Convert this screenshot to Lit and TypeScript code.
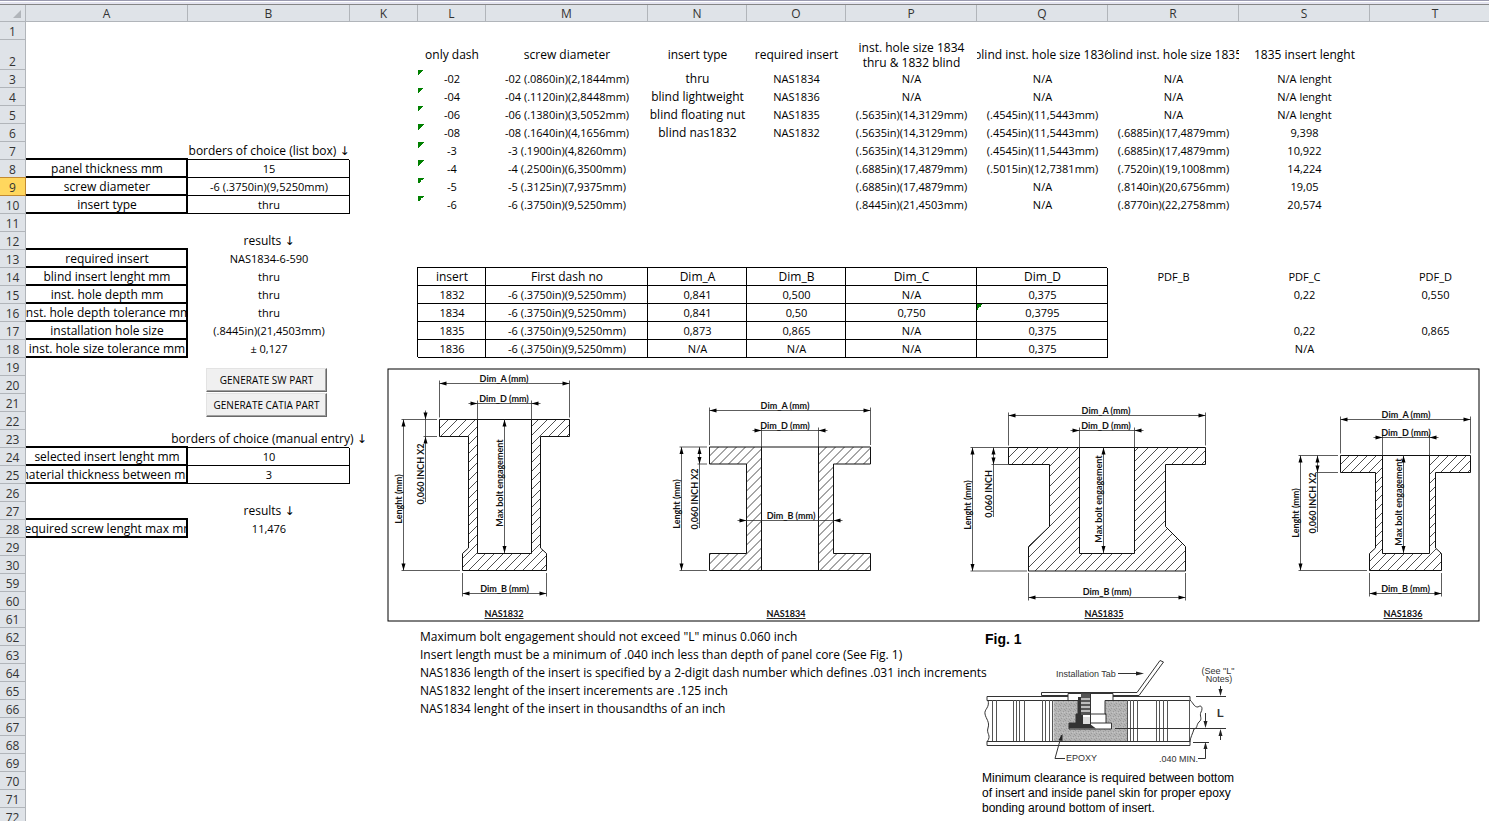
import { LitElement, html, svg, css, nothing } from "lit";
import { customElement } from "lit/decorators.js";
import { classMap } from "lit/directives/class-map.js";

type Cell = { text?: string; look?: string; flag?: boolean };

const COLUMNS = ["A", "B", "K", "L", "M", "N", "O", "P", "Q", "R", "S", "T"];
const WIDTHS: Record<string, string> = {
  A: "wide", B: "wide", K: "narrow", L: "narrow", M: "wide", N: "medium", O: "medium",
  P: "large", Q: "large", R: "large", S: "large", T: "large",
};
const ROWS = [
  ...Array.from({ length: 30 }, (_, i) => i + 1),
  ...Array.from({ length: 14 }, (_, i) => i + 59),
];
const ACTIVE_ROW = 9;

const cells: Record<string, Cell> = {};
const fill = (row: number, from: string, values: string[], look = "") => {
  const start = COLUMNS.indexOf(from);
  values.forEach((text, i) => {
    if (text) cells[COLUMNS[start + i] + row] = { text, look };
  });
};

fill(2, "L", ["only dash", "screw diameter", "insert type", "required insert"], "clip");
fill(2, "P", ["inst. hole size 1834 thru & 1832 blind"], "wrap");
fill(2, "Q", ["blind inst. hole size 1836", "blind inst. hole size 1835", "1835 insert lenght"], "clip");
fill(3, "L", ["-02", "-02 (.0860in)(2,1844mm)", "thru", "NAS1834", "N/A", "N/A", "N/A", "N/A lenght"]);
fill(4, "L", ["-04", "-04 (.1120in)(2,8448mm)", "blind lightweight", "NAS1836", "N/A", "N/A", "N/A", "N/A lenght"]);
fill(5, "L", ["-06", "-06 (.1380in)(3,5052mm)", "blind floating nut", "NAS1835", "(.5635in)(14,3129mm)", "(.4545in)(11,5443mm)", "N/A", "N/A lenght"]);
fill(6, "L", ["-08", "-08 (.1640in)(4,1656mm)", "blind nas1832", "NAS1832", "(.5635in)(14,3129mm)", "(.4545in)(11,5443mm)", "(.6885in)(17,4879mm)", "9,398"]);
fill(7, "L", ["-3", "-3 (.1900in)(4,8260mm)", "", "", "(.5635in)(14,3129mm)", "(.4545in)(11,5443mm)", "(.6885in)(17,4879mm)", "10,922"]);
fill(8, "L", ["-4", "-4 (.2500in)(6,3500mm)", "", "", "(.6885in)(17,4879mm)", "(.5015in)(12,7381mm)", "(.7520in)(19,1008mm)", "14,224"]);
fill(9, "L", ["-5", "-5 (.3125in)(7,9375mm)", "", "", "(.6885in)(17,4879mm)", "N/A", "(.8140in)(20,6756mm)", "19,05"]);
fill(10, "L", ["-6", "-6 (.3750in)(9,5250mm)", "", "", "(.8445in)(21,4503mm)", "N/A", "(.8770in)(22,2758mm)", "20,574"]);
for (let r = 3; r <= 10; r++) cells["L" + r].flag = true;
for (let r = 3; r <= 6; r++) cells["N" + r].look = "words";

fill(7, "B", ["borders of choice (list box) ↓"], "words");
fill(12, "B", ["results ↓"], "words");
fill(23, "B", ["borders of choice (manual entry) ↓"], "words");
fill(27, "B", ["results ↓"], "words");

const labels: [number, string, string, string][] = [
  [8, "panel thickness mm", "15", "box"],
  [9, "screw diameter", "-6 (.3750in)(9,5250mm)", "box"],
  [10, "insert type", "thru", "box"],
  [13, "required insert", "NAS1834-6-590", ""],
  [14, "blind insert lenght mm", "thru", ""],
  [15, "inst. hole depth mm", "thru", ""],
  [16, "inst. hole depth tolerance mm", "thru", ""],
  [17, "installation hole size", "(.8445in)(21,4503mm)", ""],
  [18, "inst. hole size tolerance mm", "± 0,127", ""],
  [24, "selected insert lenght mm", "10", "box"],
  [25, "material thickness between mm", "3", "box"],
  [28, "required screw lenght max mm", "11,476", ""],
];
for (const [row, label, value, look] of labels) {
  fill(row, "A", [label], "heavy");
  fill(row, "B", [value], look);
}

fill(14, "L", ["insert", "First dash no", "Dim_A", "Dim_B", "Dim_C", "Dim_D"], "box title");
fill(15, "L", ["1832", "-6 (.3750in)(9,5250mm)", "0,841", "0,500", "N/A", "0,375"], "box");
fill(16, "L", ["1834", "-6 (.3750in)(9,5250mm)", "0,841", "0,50", "0,750", "0,3795"], "box");
fill(17, "L", ["1835", "-6 (.3750in)(9,5250mm)", "0,873", "0,865", "N/A", "0,375"], "box");
fill(18, "L", ["1836", "-6 (.3750in)(9,5250mm)", "N/A", "N/A", "N/A", "0,375"], "box");
cells["Q16"].flag = true;
fill(14, "R", ["PDF_B", "PDF_C", "PDF_D"]);
fill(15, "S", ["0,22", "0,550"]);
fill(17, "S", ["0,22", "0,865"]);
fill(18, "S", ["N/A"]);

fill(62, "L", ['Maximum bolt engagement should not exceed "L" minus 0.060 inch'], "note");
fill(63, "L", ["Insert length must be a minimum of .040 inch less than depth of panel core (See Fig. 1)"], "note");
fill(64, "L", ["NAS1836 length of the insert is specified by a 2-digit dash number which defines .031 inch increments"], "note");
fill(65, "L", ["NAS1832 lenght of the insert incerements are .125 inch"], "note");
fill(66, "L", ["NAS1834 lenght of the insert in thousandths of an inch"], "note");

/* Arrow heads: tip at x, y, pointing in the given direction. */
const head = (x: number, y: number, dir: "l" | "r" | "u" | "d") => {
  const d = {
    l: `M${x} ${y}l7 -2v4z`,
    r: `M${x} ${y}l-7 -2v4z`,
    u: `M${x} ${y}l-2 7h4z`,
    d: `M${x} ${y}l-2 -7h4z`,
  }[dir];
  return svg`<path class="head" d=${d}></path>`;
};
const line = (d: string) => svg`<path class="dim" d=${d}></path>`;
const label = (x: number, y: number, text: string) =>
  svg`<text class="label" x=${x} y=${y + 3}>${text}</text>`;
const upright = (x: number, y: number, text: string) =>
  svg`<text class="label" x=${x + 3} y=${y} transform=${`rotate(-90 ${x + 3} ${y})`}>${text}</text>`;

type Part = {
  name: string; nameX: number; body: string; bore: string; pitch: number;
  a: [number, number, number]; d: [number, number, number, number]; top: number;
  midX: number; b: [number, number, number, number]; bInside?: boolean;
  len: [number, number, number, number, number]; lenText: number;
  lip: [number, number, number, number]; lipText: string; lipTextY: number; lipOutside?: boolean;
  bolt?: [number, number];
};

const PARTS: Part[] = [
  {
    name: "NAS1832", nameX: 504, pitch: 9,
    body: "M439.5 419.5H477.5V553.5H531.5V419.5H569.5V436.5H540.5V548L546.5 553.5V570.5H462.5V553.5L468.5 548V436.5H439.5Z",
    bore: "M477 419.5H532",
    a: [439.5, 569.5, 383.5], d: [477.5, 531.5, 403.5, 9], top: 419.5, midX: 504,
    b: [462.5, 546.5, 593.5, 589],
    len: [403.5, 419.5, 570.5, 437, 460], lenText: 499,
    lip: [425.5, 436.5, 437, 502], lipText: "0,060 INCH X2", lipTextY: 474, lipOutside: true,
    bolt: [504.5, 483],
  },
  {
    name: "NAS1834", nameX: 786, pitch: 9,
    body: "M709.5 447H761.5V570.5H709.5V553.5H746.5V464H709.5ZM818.5 447H870.5V464H833.5V553.5H870.5V570.5H818.5Z",
    bore: "M761 447H819M761 570.5H819",
    a: [709.5, 870.5, 410.5], d: [761.5, 818.5, 430.5, 9], top: 447, midX: 785,
    b: [746.5, 833.5, 520.5, 516], bInside: true,
    len: [681.5, 447, 570.5, 707, 707], lenText: 504,
    lip: [699.5, 464, 707, 528], lipText: "0,060 INCH X2", lipTextY: 499,
  },
  {
    name: "NAS1835", nameX: 1104, pitch: 10,
    body: "M1008.5 447.5H1079.5V553.5H1134.5V447.5H1205.5V464.5H1165.5V526.5L1185.5 546.5V571H1028.5V546.5L1049.5 526.5V464.5H1008.5Z",
    bore: "M1079 447.5H1135",
    a: [1008.5, 1205.5, 415.5], d: [1079.5, 1134.5, 430.5, 9], top: 447.5, midX: 1106,
    b: [1028.5, 1185.5, 597.5, 592],
    len: [972.5, 447.5, 571, 1008, 1027], lenText: 505,
    lip: [993.5, 464.5, 1008, 517], lipText: "0,060 INCH", lipTextY: 494,
    bolt: [1103.5, 499],
  },
  {
    name: "NAS1836", nameX: 1403, pitch: 9,
    body: "M1340.5 455.5H1382.5V553.5H1429.5V455.5H1470.5V472.5H1435.5V548L1441.5 553.5V570.5H1369.5V553.5L1375.5 548V472.5H1340.5Z",
    bore: "M1382 455.5H1430",
    a: [1340.5, 1470.5, 419.5], d: [1382.5, 1429.5, 437.5, 9], top: 455.5, midX: 1406,
    b: [1369.5, 1441.5, 593.5, 589],
    len: [1300.5, 455.5, 570.5, 1338, 1367], lenText: 513,
    lip: [1317.5, 472.5, 1338, 532], lipText: "0,060 INCH X2", lipTextY: 503,
    bolt: [1403.5, 502],
  },
];

/* Diagonal strokes that cover a part from its top left to its bottom right. */
const hatch = (p: Part) => {
  const height = 572 - p.top;
  let d = "";
  for (let x = p.a[0] - height; x < p.a[1]; x += p.pitch) {
    d += `M${x} 572l${height} ${-height}`;
  }
  return d;
};

const drawPart = (p: Part) => {
  const [a1, a2, ay] = p.a;
  const [d1, d2, dy, tail] = p.d;
  const [b1, b2, by, bText] = p.b;
  const [lx, l1, l2, lTop, lBottom] = p.len;
  const [px, pBottom, pEdge, pEnd] = p.lip;
  return svg`
    <clipPath id=${"clip-" + p.name}><path d=${p.body}></path></clipPath>
    <path class="hatch" clip-path=${`url(#clip-${p.name})`} d=${hatch(p)}></path>
    <path class="edge" d=${p.body}></path>
    <path class="edge" d=${p.bore}></path>
    ${line(`M${a1} ${ay}H${a2}M${a1} ${ay - 3}V${p.top - 2}M${a2} ${ay - 3}V${p.top - 2}`)}
    ${head(a1, ay, "l")}${head(a2, ay, "r")}${label(p.midX, ay - 5, "Dim_A (mm)")}
    ${line(`M${d1 - tail} ${dy}H${d2 + tail}M${d1} ${dy - 3}V${p.top}M${d2} ${dy - 3}V${p.top}`)}
    ${head(d1, dy, "r")}${head(d2, dy, "l")}${label(p.midX, dy - 5, "Dim_D (mm)")}
    ${p.bInside
      ? svg`${line(`M${b1 - 9} ${by}H${b2 + 9}`)}${head(b1, by, "r")}${head(b2, by, "l")}${label(791, bText, "Dim_B (mm)")}`
      : svg`${line(`M${b1} ${by}H${b2}M${b1} 573V${by + 3}M${b2} 573V${by + 3}`)}${head(b1, by, "l")}${head(b2, by, "r")}${label((b1 + b2) / 2, bText, "Dim_B (mm)")}`}
    ${line(`M${lx} ${l1}V${l2}M${lx - 2} ${l1}H${lTop}M${lx - 2} ${l2}H${lBottom}`)}
    ${head(lx, l1, "u")}${head(lx, l2, "d")}${upright(lx - 5, p.lenText, "Lenght (mm)")}
    ${line(`M${px} ${p.lipOutside ? l1 - 9 : l1}V${pEnd}M${px - 2} ${pBottom}H${pEdge}`)}
    ${p.lipOutside
      ? svg`${head(px, l1, "d")}${head(px, pBottom, "u")}`
      : svg`${head(px, l1, "u")}${head(px, pBottom, "d")}`}
    ${upright(px - 5, p.lipTextY, p.lipText)}
    ${p.bolt
      ? svg`${line(`M${p.bolt[0]} ${p.top}V553`)}${head(p.bolt[0], p.top, "u")}${head(p.bolt[0], 553, "d")}${upright(p.bolt[0] - 5, p.bolt[1], "Max bolt engagement")}`
      : nothing}
    <text class="label name" x=${p.nameX} y="617">${p.name}</text>
  `;
};

const partsDrawing = html`
  <svg class="parts" viewBox="387 368 1093 254" role="img" aria-label="Insert types">
    <rect class="frame" x="388" y="369" width="1091" height="252"></rect>
    ${PARTS.map(drawPart)}
  </svg>
`;

const panelDrawing = html`
  <svg class="panel" viewBox="980 652 264 114" role="img" aria-label="Panel section">
    <defs>
      <pattern id="grain" width="5" height="5" patternUnits="userSpaceOnUse">
        <rect width="5" height="5" fill="#b4b4b4"></rect>
        <path d="M0 0h1v1h-1zM3 1h1v1h-1zM1 3h1v1h-1zM4 4h1v1h-1z" fill="#9a9a9a"></path>
        <path d="M2 2h1v1h-1zM4 2h1v1h-1z" fill="#c4c4c4"></path>
      </pattern>
    </defs>
    <rect x="1053.5" y="700" width="74" height="42" fill="url(#grain)"></rect>
    <path class="ink" d="M987 696.5H1190V700.5H987ZM987 741.5H1190V745.5H987Z"></path>
    <path class="core" d="M992.5 700V741M996.5 700V741M1013.5 700V741M1016.5 700V741M1019.5 700V741M1024.5 700V741M1042.5 700V741M1045.5 700V741M1049.5 700V741M1052.5 700V741M1127.5 700V741M1130.5 700V741M1133.5 700V741M1137.5 700V741M1156.5 700V741M1159.5 700V741M1163.5 700V741M1167.5 700V741M1189.5 700V741"></path>
    <path class="ink open" d="M988 700C990 708 984 709 985 714S990 722 988 728S992 735 987 742M1190 700C1194 704 1194 707 1198 707C1202 704 1203 709 1201 712C1199 716 1203 719 1199 722C1196 725 1198 728 1194 729C1193 733 1190 738 1190 742"></path>
    <path class="ink" d="M1041.500 692.5H1137L1160 660.500L1163.500 662L1139 695.500H1041.500Z"></path>
    <path d="M1068 693.500H1113V700.500H1105V714H1106V723H1111.500V729H1069V723H1076V714H1078V700.500H1068Z" fill="#fff" stroke="#333"></path>
    <path d="M1078 697H1081V713H1083V724H1090L1096 728.500H1069V723H1076V714H1078Z" fill="#333"></path>
    <path d="M1081 693.500H1091V715H1081Z" fill="#555"></path>
    <path d="M1081 699H1091M1081 703H1091M1081 707H1091M1081 711H1091" stroke="#ddd" stroke-width="1.500"></path>
    <path d="M1083 717H1090V724H1083Z" fill="#ddd"></path>
    <path class="ink open" d="M1090.500 714H1106M1090.500 723H1106M1090.500 693V728"></path>
    <path class="ink open" d="M1118 673.500H1138M1196 696.500H1226M1115 728.500H1226M1193 742.500H1209M1220.500 686V690M1220.500 735V740M1205.500 713V722M1205.500 748V758.500H1198M1061.500 735L1055 758.500H1065"></path>
    <path class="solid" d="M1144 673.500l-8 -2v4zM1220.500 696l-2 -7h4zM1220.500 729l-2 7h4zM1205.500 728l-2 -7h4zM1205.500 742l-2 7h4zM1062.500 734l-4 6l4 1z"></path>
    <text class="print" x="1056" y="677">Installation Tab</text>
    <text class="print mid" x="1218" y="674">(See "L"</text>
    <text class="print mid" x="1219" y="682">Notes)</text>
    <text class="print" x="1066" y="761">EPOXY</text>
    <text class="print" x="1159" y="762">.040 MIN.</text>
    <text class="print strong" x="1217" y="717">L</text>
  </svg>
`;

@customElement("app-root")
export class AppRoot extends LitElement {
  static styles = css`
    :host {
      display: block;
      height: 100vh;
      overflow: hidden;
      background: #fff;
      color: #000;
      font: 11px/18px "Open Sans", "Noto Sans", sans-serif;
    }
    .strip {
      height: 5px;
      box-sizing: border-box;
      border-top: 1px solid #9b9bb0;
      border-bottom: 1px solid #868686;
      background: linear-gradient(#fff 50%, #e4e4f0 50%);
    }
    .sheet { position: relative; }
    table {
      table-layout: fixed;
      width: 1501px;
      min-width: 100%;
      border-collapse: separate;
      border-spacing: 0;
    }
    .gutter { width: 26px; }
    .narrow { width: 68px; }
    .medium { width: 99px; }
    .large { width: 131px; }
    .wide { width: 162px; }
    th, td { padding: 0; height: 18px; }
    thead th { height: 17px; }
    tr.tall > * { height: 30px; }
    th {
      box-sizing: border-box;
      background: #dfe3e8;
      border-right: 1px solid #b1b5ba;
      border-bottom: 1px solid #b1b5ba;
      color: #333;
      font-size: 12px;
      font-weight: 400;
      line-height: 14px;
      vertical-align: bottom;
    }
    th.hidden-next { box-shadow: 1px 0 0 #b1b5ba; }
    th.active {
      background: #ffd75e;
      border-color: #c28a30;
      box-shadow: 0 -1px 0 #c28a30;
    }
    .corner svg { display: block; margin: 0 4px 3px auto; width: 8px; height: 8px; }
    td { text-align: center; vertical-align: middle; }
    .value { display: flex; justify-content: center; white-space: nowrap; }
    .clip, .wrap, .words, .heavy, .title, .note { font-size: 12px; }
    .clip .value, .heavy .value { overflow: hidden; }
    .wrap .value { white-space: normal; line-height: 15px; padding: 0 8px; }
    .note .value { justify-content: flex-start; padding-left: 2px; }
    .box { box-shadow: inset -1px -1px 0 #000, -1px -1px 0 #000; }
    .heavy { box-shadow: inset -2px -2px 0 #000, 0 -2px 0 #000; }
    .flag {
      background: linear-gradient(135deg, #008000 50%, transparent 50%) 0 0 / 6px 6px no-repeat;
    }
    .arrow { font: 12px/18px "DejaVu Sans", sans-serif; }
    .actions {
      position: absolute;
      left: 206px;
      top: 363px;
      width: 121px;
      display: grid;
      gap: 1px;
    }
    button {
      height: 24px;
      padding: 0;
      border: 1px solid;
      border-color: #e3e3e3 #696969 #696969 #e3e3e3;
      box-shadow: inset -1px -1px 0 #a0a0a0;
      background: #f0f0f0;
      color: #000;
      font: inherit;
      font-size: 10px;
      line-height: 16px;
      white-space: nowrap;
    }
    .parts { position: absolute; left: 387px; top: 363px; width: 1093px; height: 254px; background: #fff; }
    .frame { fill: none; stroke: #000; }
    .hatch { fill: none; stroke: #222; stroke-width: 0.8; }
    .edge { fill: none; stroke: #111; }
    .dim { fill: none; stroke: #333; stroke-width: 0.8; }
    .head { fill: #000; }
    .label { font: 700 9px Lato, "Open Sans", sans-serif; text-anchor: middle; fill: #111; }
    .name { text-decoration: underline; }
    figure {
      position: absolute;
      left: 980px;
      top: 625px;
      margin: 0;
      font: 12px/15px "Liberation Sans", Arial, sans-serif;
    }
    h2 { margin: 0 0 4px 5px; font-size: 14px; line-height: 18px; }
    .panel { display: block; width: 264px; height: 114px; }
    figcaption { width: 264px; padding: 5px 2px 0; }
    .ink { fill: #fff; stroke: #333; }
    .open { fill: none; }
    .core { fill: none; stroke: #555; }
    .solid { fill: #222; }
    .print { font: 9px "Liberation Sans", Arial, sans-serif; fill: #333; }
    .mid { text-anchor: middle; }
    .strong { font-size: 11px; font-weight: 700; }
  `;

  private cell(col: string, row: number) {
    const c = cells[col + row];
    if (!c) return html`<td></td>`;
    const look: Record<string, boolean> = { flag: !!c.flag };
    for (const name of (c.look || "plain").split(" ")) look[name] = true;
    const [text, arrow] = (c.text ?? "").split("↓");
    return html`<td class=${classMap(look)}><div class="value"><span>${text}${arrow === undefined ? nothing : html`<span class="arrow">↓</span>`}</span></div></td>`;
  }

  render() {
    return html`
      <div class="strip"></div>
      <main class="sheet">
        <table>
          <colgroup>
            <col class="gutter" />
            ${COLUMNS.map((c) => html`<col class=${WIDTHS[c]} />`)}
          </colgroup>
          <thead>
            <tr>
              <th class="corner" aria-label="Select all">
                <svg viewBox="0 0 8 8"><path d="M8 0V8H0Z" fill="#b1b5ba"></path></svg>
              </th>
              ${COLUMNS.map((c) => html`<th scope="col" class=${c === "B" ? "hidden-next" : ""}>${c}</th>`)}
            </tr>
          </thead>
          <tbody>
            ${ROWS.map((r) => html`
              <tr class=${r === 2 ? "tall" : ""}>
                <th scope="row" class=${r === ACTIVE_ROW ? "active" : ""}>${r}</th>
                ${COLUMNS.map((c) => this.cell(c, r))}
              </tr>`)}
          </tbody>
        </table>
        <div class="actions">
          <button type="button">GENERATE SW PART</button>
          <button type="button">GENERATE CATIA PART</button>
        </div>
        ${partsDrawing}
        <figure>
          <h2>Fig. 1</h2>
          ${panelDrawing}
          <figcaption>Minimum clearance is required between bottom of insert and inside panel skin for proper epoxy bonding around bottom of insert.</figcaption>
        </figure>
      </main>
    `;
  }
}
